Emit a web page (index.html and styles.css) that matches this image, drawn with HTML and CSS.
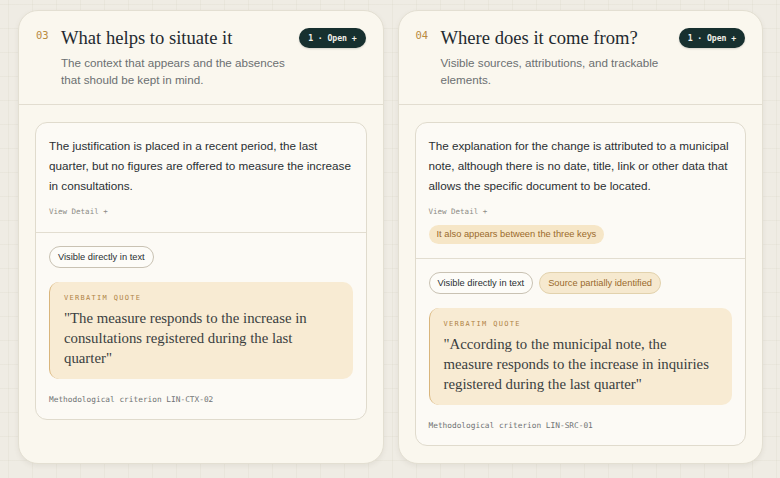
FILE: index.html
```html
<!DOCTYPE html>
<html lang="en">
<head>
<meta charset="utf-8">
<title>Analysis cards</title>
<link rel="stylesheet" href="styles.css">
</head>
<body>
<main class="page">
  <section class="card">
    <header class="card-head">
      <span class="num">03</span>
      <div class="head-text">
        <h2 class="title">What helps to situate it</h2>
        <p class="subtitle">The context that appears and the absences that should be kept in mind.</p>
      </div>
      <span class="badge">1 · Open +</span>
    </header>
    <div class="card-body">
      <div class="panel">
        <div class="panel-top">
          <p class="explain">The justification is placed in a recent period, the last quarter, but no figures are offered to measure the increase in consultations.</p>
          <div class="detail">View Detail +</div>
        </div>
        <div class="panel-bottom">
          <div class="pills">
            <span class="pill">Visible directly in text</span>
          </div>
          <div class="quote">
            <div class="quote-label">VERBATIM QUOTE</div>
            <p class="quote-text">"The measure responds to the increase in consultations registered during the last quarter"</p>
          </div>
          <div class="criterion">Methodological criterion LIN-CTX-02</div>
        </div>
      </div>
    </div>
  </section>

  <section class="card">
    <header class="card-head">
      <span class="num">04</span>
      <div class="head-text">
        <h2 class="title">Where does it come from?</h2>
        <p class="subtitle">Visible sources, attributions, and trackable elements.</p>
      </div>
      <span class="badge">1 · Open +</span>
    </header>
    <div class="card-body">
      <div class="panel">
        <div class="panel-top">
          <p class="explain">The explanation for the change is attributed to a municipal note, although there is no date, title, link or other data that allows the specific document to be located.</p>
          <div class="detail">View Detail +</div>
          <span class="tag">It also appears between the three keys</span>
        </div>
        <div class="panel-bottom">
          <div class="pills">
            <span class="pill">Visible directly in text</span>
            <span class="pill pill-warm">Source partially identified</span>
          </div>
          <div class="quote">
            <div class="quote-label">VERBATIM QUOTE</div>
            <p class="quote-text">"According to the municipal note, the measure responds to the increase in inquiries registered during the last quarter"</p>
          </div>
          <div class="criterion">Methodological criterion LIN-SRC-01</div>
        </div>
      </div>
    </div>
  </section>
</main>
</body>
</html>
```

FILE: styles.css
```css
* { box-sizing: border-box; }

html, body {
  margin: 0;
  height: 100%;
}

body {
  background-color: #efece4;
  background-image:
    linear-gradient(to right, rgba(200, 192, 172, 0.14) 1px, transparent 1px),
    linear-gradient(to bottom, rgba(200, 192, 172, 0.14) 1px, transparent 1px);
  background-size: 24px 24px;
  background-position: 8px 4px;
  font-family: "Liberation Sans", Arial, sans-serif;
  color: #2a2f33;
}

.page {
  display: grid;
  grid-template-columns: 1fr 1fr;
  gap: 14px;
  padding: 10px 17px 15px 18px;
  align-items: stretch;
}

.card {
  background: #faf7ee;
  border: 1px solid #e3dfd2;
  border-radius: 20px;
  box-shadow: 0 2px 5px rgba(90, 80, 60, 0.08);
  display: flex;
  flex-direction: column;
}

.card-head {
  display: flex;
  align-items: flex-start;
  padding: 15px 17px 16px 16px;
  border-bottom: 1px solid #e2ddd0;
}

.num {
  font-family: "DejaVu Sans Mono", "Liberation Mono", monospace;
  font-size: 10.5px;
  color: #b98a3e;
  width: 26px;
  margin-top: 3px;
  padding-left: 1px;
  flex: none;
}

.head-text {
  flex: 1;
  min-width: 0;
}

.title {
  margin: 0;
  font-family: "Liberation Serif", "Times New Roman", serif;
  font-weight: normal;
  font-size: 18.6px;
  line-height: 24px;
  color: #1f2a30;
}

.subtitle {
  margin: 4px 0 0;
  font-size: 11.65px;
  line-height: 17px;
  color: #6b6f71;
  max-width: 232px;
}

.badge {
  flex: none;
  margin-top: 2px;
  background: #17302f;
  color: #f3f1ea;
  font-family: "DejaVu Sans Mono", "Liberation Mono", monospace;
  font-weight: bold;
  font-size: 8.2px;
  line-height: 20px;
  height: 20px;
  padding: 0 9px;
  border-radius: 10px;
  letter-spacing: -0.1px;
  box-shadow: 0 1px 2px rgba(0, 0, 0, 0.15);
}

.card-body {
  padding: 17px 16px 17px 16px;
  flex: 1;
}

.panel {
  background: #fcfaf5;
  border: 1px solid #e0dbcd;
  border-radius: 12px;
}

.panel-top {
  padding: 13px 12px 14px 13px;
  border-bottom: 1px solid #e2ddd0;
}

.explain {
  margin: 0;
  font-size: 11.7px;
  line-height: 20px;
  color: #2a2f33;
}

.detail {
  margin-top: 10px;
  font-family: "DejaVu Sans Mono", "Liberation Mono", monospace;
  font-size: 7.5px;
  line-height: 12px;
  color: #8c8b85;
}

.tag {
  display: inline-block;
  margin-top: 7px;
  height: 19px;
  line-height: 19px;
  padding: 0 8px;
  border-radius: 10px;
  background: #f6e6c7;
  color: #9a6a2c;
  font-size: 9.3px;
}

.panel-bottom {
  padding: 13px 13px 13px 13px;
}

.pills {
  display: flex;
  gap: 6px;
}

.pill {
  display: inline-block;
  height: 22px;
  line-height: 20px;
  padding: 0 8px;
  border: 1px solid #c9c2b3;
  border-radius: 11px;
  background: #fdfcf8;
  color: #2a2f33;
  font-size: 9.3px;
}

.pill-warm {
  background: #f6e9cf;
  border-color: #e2d2ad;
  color: #9a6a2c;
}

.quote {
  margin-top: 14px;
  background: #f8ebd3;
  border-left: 1px solid #d9b57c;
  border-radius: 10px;
  padding: 10px 14px 11px 14px;
}

.quote-label {
  font-family: "DejaVu Sans Mono", "Liberation Mono", monospace;
  font-size: 7px;
  line-height: 12px;
  letter-spacing: 1.3px;
  color: #b08447;
}

.quote-text {
  margin: 4px 0 0;
  font-family: "Liberation Serif", "Times New Roman", serif;
  font-size: 14.8px;
  line-height: 20px;
  color: #3a3e40;
}

.criterion {
  margin-top: 15px;
  font-family: "DejaVu Sans Mono", "Liberation Mono", monospace;
  font-size: 7.8px;
  line-height: 12px;
  color: #6f7274;
}
```
